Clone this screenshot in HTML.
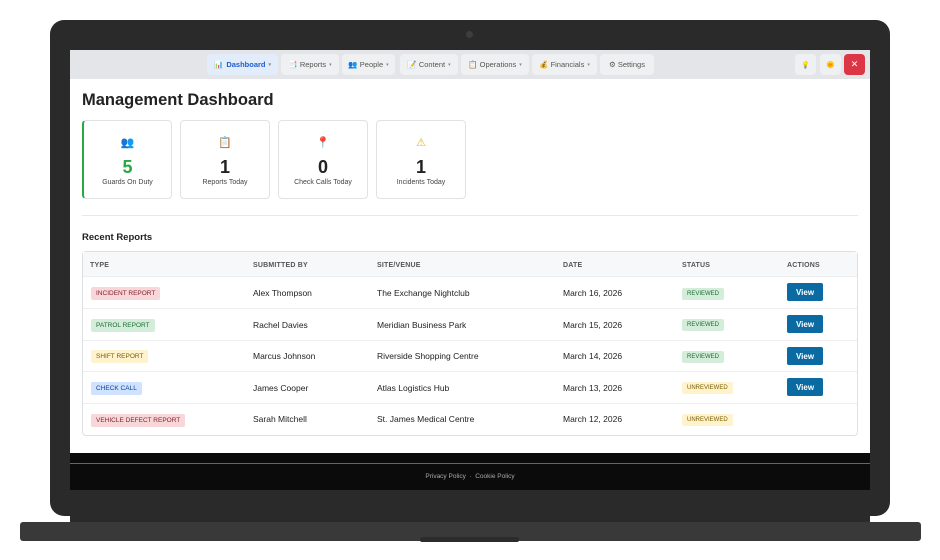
<!DOCTYPE html>
<html><head><style>
*{margin:0;padding:0;box-sizing:border-box}
body{width:940px;height:560px;background:#fff;position:relative;font-family:"Liberation Sans",sans-serif;overflow:hidden}
.a{position:absolute}
.nb{position:absolute;top:54px;height:21px;background:#eff0f2;border-radius:4px;font-size:7.5px;color:#555;display:flex;align-items:center;justify-content:center;gap:3px}
.nb .c{font-size:5px;color:#888}
.card{position:absolute;top:120px;width:90px;height:79px;border:1px solid #e2e2e2;border-radius:4px;background:#fff;text-align:center}
.card .i{position:absolute;top:15px;left:0;right:0;font-size:11px}
.card .n{position:absolute;top:36px;left:0;right:0;font-size:18px;font-weight:bold;color:#222}
.card .l{position:absolute;top:58px;left:0;right:0;font-size:7px;color:#444}
.th{position:absolute;top:262px;font-size:7px;font-weight:bold;color:#555;letter-spacing:.2px}
.row{position:absolute;left:83px;width:774px;height:32px;border-top:1px solid #eceef0}
.td{position:absolute;font-size:8.5px;color:#222}
.tag{position:absolute;font-size:6.5px;padding:3px 5px;border-radius:2px}
.red{background:#f8d7da;color:#842029}.grn{background:#d4edda;color:#1e6b34}.yel{background:#fff3cd;color:#7a5d00}.blu{background:#cfe2ff;color:#084298}
.btn{position:absolute;left:787px;width:36px;height:18px;background:#0a6aa1;color:#fff;font-size:8px;font-weight:bold;border-radius:2px;display:flex;align-items:center;justify-content:center}
</style></head><body>
<div class="a" style="left:50px;top:20px;width:840px;height:496px;background:#2a2a2a;border-radius:14px"></div>
<div class="a" style="left:466px;top:31px;width:7px;height:7px;border-radius:50%;background:#3d3d3d"></div>
<div class="a" style="left:70px;top:515px;width:800px;height:8px;background:#2a2a2a"></div>
<div class="a" style="left:20px;top:522px;width:901px;height:19px;background:#393939;border-radius:3px"></div>
<div class="a" style="left:420px;top:537px;width:99px;height:5px;background:#2c2c2c;border-radius:2px"></div>
<div class="a" style="left:70px;top:50px;width:800px;height:440px;background:#fff;overflow:hidden">
<div class="a" style="left:0;top:0;width:800px;height:29px;background:#e3e5e8"></div>
<div class="a" style="left:0;top:403px;width:800px;height:37px;background:#0b0b0b"></div>
<div class="a" style="left:0;top:413px;width:800px;height:1px;background:#666"></div>
<div class="a" style="left:0;top:423px;width:800px;text-align:center;font-size:6.5px;color:#aaa">Privacy Policy &nbsp;·&nbsp; Cookie Policy</div>
</div>
<div class="nb" style="left:207px;width:71px;background:#e3ecfa;color:#1a5fd0;font-weight:bold"><span style="color:#c33">📊</span>Dashboard <span class="c">▾</span></div>
<div class="nb" style="left:281px;width:58px">📑 Reports <span class="c">▾</span></div>
<div class="nb" style="left:342px;width:53px">👥 People <span class="c">▾</span></div>
<div class="nb" style="left:400px;width:58px">📝 Content <span class="c">▾</span></div>
<div class="nb" style="left:461px;width:68px">📋 Operations <span class="c">▾</span></div>
<div class="nb" style="left:532px;width:65px">💰 Financials <span class="c">▾</span></div>
<div class="nb" style="left:600px;width:54px">⚙ Settings</div>
<div class="nb" style="left:795px;width:21px;font-size:7px">💡</div>
<div class="nb" style="left:820px;width:21px;font-size:7px">🌞</div>
<div class="nb" style="left:844px;width:21px;background:#dc3545;color:#fff;font-size:9px">✕</div>

<div class="a" style="left:82px;top:91px;font-size:16.5px;font-weight:bold;color:#222">Management Dashboard</div>
<div class="card" style="left:82px;border-left:2px solid #28a745"><div class="i" style="color:#3a5a8a">👥</div><div class="n" style="color:#28a745">5</div><div class="l">Guards On Duty</div></div>
<div class="card" style="left:180px"><div class="i">📋</div><div class="n">1</div><div class="l">Reports Today</div></div>
<div class="card" style="left:278px"><div class="i" style="color:#d33">📍</div><div class="n">0</div><div class="l">Check Calls Today</div></div>
<div class="card" style="left:376px"><div class="i" style="color:#e8b800">⚠</div><div class="n">1</div><div class="l">Incidents Today</div></div>
<div class="a" style="left:82px;top:215px;width:776px;height:1px;background:#e8e8e8"></div>
<div class="a" style="left:82px;top:232px;font-size:9.5px;font-weight:bold;color:#222">Recent Reports</div>

<div class="a" style="left:82px;top:251px;width:776px;height:185px;border:1px solid #dde0e3;border-radius:4px;background:#fff"></div>
<div class="a" style="left:83px;top:252px;width:774px;height:24px;background:#f7f8f9"></div>
<div class="th" style="left:90px">TYPE</div><div class="th" style="left:253px">SUBMITTED BY</div><div class="th" style="left:377px">SITE/VENUE</div><div class="th" style="left:563px">DATE</div><div class="th" style="left:682px">STATUS</div><div class="th" style="left:787px">ACTIONS</div>

<div class="row" style="top:276px"></div><div class="row" style="top:308px"></div><div class="row" style="top:340px"></div><div class="row" style="top:371px"></div><div class="row" style="top:403px"></div>

<div class="tag red" style="left:91px;top:287px">INCIDENT REPORT</div>
<div class="tag grn" style="left:91px;top:319px">PATROL REPORT</div>
<div class="tag yel" style="left:91px;top:350px">SHIFT REPORT</div>
<div class="tag blu" style="left:91px;top:382px">CHECK CALL</div>
<div class="tag red" style="left:91px;top:414px">VEHICLE DEFECT REPORT</div>

<div class="td" style="left:253px;top:288px">Alex Thompson</div><div class="td" style="left:377px;top:288px">The Exchange Nightclub</div><div class="td" style="left:563px;top:288px">March 16, 2026</div>
<div class="td" style="left:253px;top:320px">Rachel Davies</div><div class="td" style="left:377px;top:320px">Meridian Business Park</div><div class="td" style="left:563px;top:320px">March 15, 2026</div>
<div class="td" style="left:253px;top:351px">Marcus Johnson</div><div class="td" style="left:377px;top:351px">Riverside Shopping Centre</div><div class="td" style="left:563px;top:351px">March 14, 2026</div>
<div class="td" style="left:253px;top:383px">James Cooper</div><div class="td" style="left:377px;top:383px">Atlas Logistics Hub</div><div class="td" style="left:563px;top:383px">March 13, 2026</div>
<div class="td" style="left:253px;top:414px">Sarah Mitchell</div><div class="td" style="left:377px;top:414px">St. James Medical Centre</div><div class="td" style="left:563px;top:414px">March 12, 2026</div>

<div class="tag grn" style="left:682px;top:288px;font-size:6px">REVIEWED</div>
<div class="tag grn" style="left:682px;top:319px;font-size:6px">REVIEWED</div>
<div class="tag grn" style="left:682px;top:351px;font-size:6px">REVIEWED</div>
<div class="tag yel" style="left:682px;top:382px;font-size:6px">UNREVIEWED</div>
<div class="tag yel" style="left:682px;top:414px;font-size:6px">UNREVIEWED</div>

<div class="btn" style="top:283px">View</div>
<div class="btn" style="top:315px">View</div>
<div class="btn" style="top:347px">View</div>
<div class="btn" style="top:378px">View</div>
</body></html>
